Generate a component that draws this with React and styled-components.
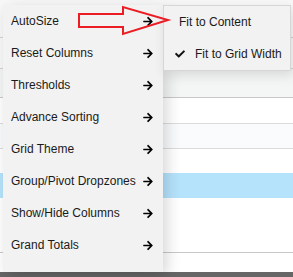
import React from 'react';
import styled, { createGlobalStyle } from 'styled-components';
import { FaArrowRight, FaCheck } from 'react-icons/fa';

const GlobalStyle = createGlobalStyle`
    html, body {
        margin: 0;
        padding: 0;
        background: #ffffff;
        font-family: Arial, "Liberation Sans", sans-serif;
    }
    * { box-sizing: border-box; }
`

// background grid
const Page = styled.div`
    position: relative;
    width: 293px;
    height: 277px;
    overflow: hidden;
`

const GridRow = styled.div`
    height: ${props => props.h}px;
    background: ${props => props.bg || '#ffffff'};
    border-bottom: ${props => props.line ? `1px solid ${props.line}` : 'none'};
`

const Footer = styled.div`
    height: 10px;
    background: #666666;
`

// context menu
const Menu = styled.div`
    position: absolute;
    left: 3px;
    top: 5px;
    width: 160px;
    height: 267px;
    background: #f2f2f2;
    box-shadow: 4px 4px 14px rgba(0, 0, 0, 0.16);
`

const MenuItem = styled.div`
    height: 32px;
    display: flex;
    align-items: center;
    justify-content: space-between;
    padding: 0 10px 0 8px;
    font-size: 12px;
    color: #1a1a1a;
`

const SubMenu = styled.div`
    position: absolute;
    left: 163px;
    top: 5px;
    width: 128px;
    background: #f2f2f2;
    border: 1px solid #d6d6d6;
    box-shadow: 3px 4px 12px rgba(0, 0, 0, 0.12);
`

const SubItem = styled.div`
    height: 32px;
    display: flex;
    align-items: center;
    padding-left: ${props => props.checked ? '11px' : '15px'};
    font-size: 12px;
    color: #1a1a1a;
    gap: 10px;
`

const Arrow = styled(FaArrowRight)`
    width: 10px;
    height: 11px;
    color: #000;
`

const Check = styled(FaCheck)`
    width: 10px;
    height: 10px;
    color: #111;
`

const Callout = styled.svg`
    position: absolute;
    left: 0;
    top: 0;
    pointer-events: none;
`

const items = [
    'AutoSize',
    'Reset Columns',
    'Thresholds',
    'Advance Sorting',
    'Grid Theme',
    'Group/Pivot Dropzones',
    'Show/Hide Columns',
    'Grand Totals',
]

class App extends React.Component {
    render() {
        return (
            <Page>
                <GlobalStyle />
                <GridRow h={38} bg="#f8f8f8" line="#d2d2d2" />
                <GridRow h={31} bg="#f8f8f8" line="#d2d2d2" />
                <GridRow h={29} bg="#f4f5f5" line="#c8c8c8" />
                <GridRow h={26} line="#dcdcdc" />
                <GridRow h={25} bg="#fafbfd" line="#dcdcdc" />
                <GridRow h={24} />
                <GridRow h={25} bg="#b5e3fc" />
                <GridRow h={55} line="#c8c8c8" />
                <GridRow h={19} />
                <Footer />

                <Menu>
                    {items.map(label => (
                        <MenuItem key={label}>
                            <span>{label}</span>
                            <Arrow />
                        </MenuItem>
                    ))}
                </Menu>

                <SubMenu>
                    <SubItem>Fit to Content</SubItem>
                    <SubItem checked><Check /><span>Fit to Grid Width</span></SubItem>
                </SubMenu>

                <Callout width="293" height="60" viewBox="0 0 293 60">
                    <polygon
                        points="79,14 123,14 123,7 168,20 123,34 123,27 79,27"
                        fill="none"
                        stroke="#ec1c24"
                        strokeWidth="2"
                    />
                </Callout>
            </Page>
        )
    }
}

export default App;
